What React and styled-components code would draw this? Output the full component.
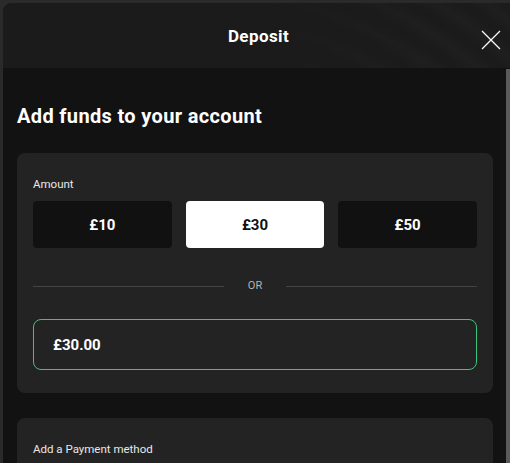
import React, { useState } from 'react';
import styled, { createGlobalStyle } from 'styled-components';

const GlobalStyle = createGlobalStyle`
  html, body {
    margin: 0;
    padding: 0;
    background: #2a2a2a;
    font-family: Roboto, "Liberation Sans", sans-serif;
    overflow: hidden;
  }
`;

const Page = styled.div`
  height: 463px;
  padding: 3px 0 0 3px;
  box-sizing: border-box;
`;

const Modal = styled.div`
  height: 100%;
  background: #121212;
  border-top-left-radius: 9px;
  overflow: hidden;
  display: flex;
  flex-direction: column;
`;

const Header = styled.header`
  position: relative;
  flex: 0 0 65px;
  display: flex;
  align-items: center;
  justify-content: center;
  background: #1b1b1b;
  overflow: hidden;

  &::before {
    content: '';
    position: absolute;
    inset: 0;
    background: repeating-radial-gradient(
      circle at 180px 420px,
      rgba(255, 255, 255, 0) 0px,
      rgba(255, 255, 255, 0.018) 14px,
      rgba(255, 255, 255, 0) 28px
    );
    -webkit-mask-image: linear-gradient(to right, transparent 45%, #000 85%);
    mask-image: linear-gradient(to right, transparent 45%, #000 85%);
  }
`;

const HeaderTitle = styled.h1`
  position: relative;
  margin: 0 0 0 4px;
  font-size: 17px;
  font-weight: 700;
  color: #fff;
  letter-spacing: 0.4px;
`;

const CloseButton = styled.button`
  position: absolute;
  right: 8px;
  top: 26px;
  width: 22px;
  height: 22px;
  padding: 0;
  border: 0;
  background: none;
  cursor: pointer;
`;

const Body = styled.div`
  flex: 1;
  display: flex;
  min-height: 0;
`;

const Content = styled.div`
  flex: 1;
  padding: 36px 13px 0 14px;
`;

const Scrollbar = styled.div`
  width: 4px;
  margin-top: 1px;
  background: #5a5a5a;
`;

const Title = styled.h2`
  margin: 0 0 25px;
  font-size: 20px;
  font-weight: 700;
  color: #fff;
  line-height: 24px;
  letter-spacing: 0.35px;
`;

const Card = styled.section`
  background: #232323;
  border-radius: 8px;
  padding: ${(p) => p.$pad || '23px 16px 23px'};
  margin-bottom: 25px;
`;

const Label = styled.div`
  font-size: 11.5px;
  color: #e8e8e8;
  line-height: 16px;
  margin-bottom: 9px;
`;

const AmountRow = styled.div`
  display: grid;
  grid-template-columns: repeat(3, 1fr);
  gap: 14px;
`;

const AmountButton = styled.button`
  height: 47px;
  border: 0;
  border-radius: 4px;
  background: ${(p) => (p.$active ? '#ffffff' : '#111111')};
  color: ${(p) => (p.$active ? '#111111' : '#ffffff')};
  font-family: inherit;
  font-size: 15px;
  font-weight: 700;
  cursor: pointer;
`;

const Divider = styled.div`
  display: flex;
  align-items: center;
  gap: 24px;
  margin: 31px 0 26px;
  color: #b5b5b5;
  font-size: 11px;
  line-height: 14px;

  &::before,
  &::after {
    content: '';
    flex: 1;
    height: 1px;
    background: #444;
  }
`;

const AmountInput = styled.input`
  display: block;
  width: 100%;
  box-sizing: border-box;
  height: 51px;
  padding: 0 19px;
  border: 1px solid #3cc47a;
  border-radius: 8px;
  background: #232323;
  color: #fff;
  font-family: inherit;
  font-size: 15px;
  font-weight: 700;
  outline: none;
`;

const amounts = [10, 30, 50];

export default function App() {
  const [selected, setSelected] = useState(30);
  const [value, setValue] = useState('£30.00');

  return (
    <>
      <GlobalStyle />
      <Page>
        <Modal>
          <Header>
            <HeaderTitle>Deposit</HeaderTitle>
            <CloseButton aria-label="Close">
              <svg width="22" height="22" viewBox="0 0 22 22">
                <path d="M2 2 L20 20 M20 2 L2 20" stroke="#fff" strokeWidth="1.2" />
              </svg>
            </CloseButton>
          </Header>
          <Body>
            <Content>
              <Title>Add funds to your account</Title>
              <Card>
                <Label>Amount</Label>
                <AmountRow>
                  {amounts.map((a) => (
                    <AmountButton
                      key={a}
                      $active={selected === a}
                      onClick={() => {
                        setSelected(a);
                        setValue(`£${a}.00`);
                      }}
                    >
                      £{a}
                    </AmountButton>
                  ))}
                </AmountRow>
                <Divider>OR</Divider>
                <AmountInput value={value} onChange={(e) => setValue(e.target.value)} />
              </Card>
              <Card $pad="23px 16px 30px">
                <Label>Add a Payment method</Label>
              </Card>
            </Content>
            <Scrollbar />
          </Body>
        </Modal>
      </Page>
    </>
  );
}
